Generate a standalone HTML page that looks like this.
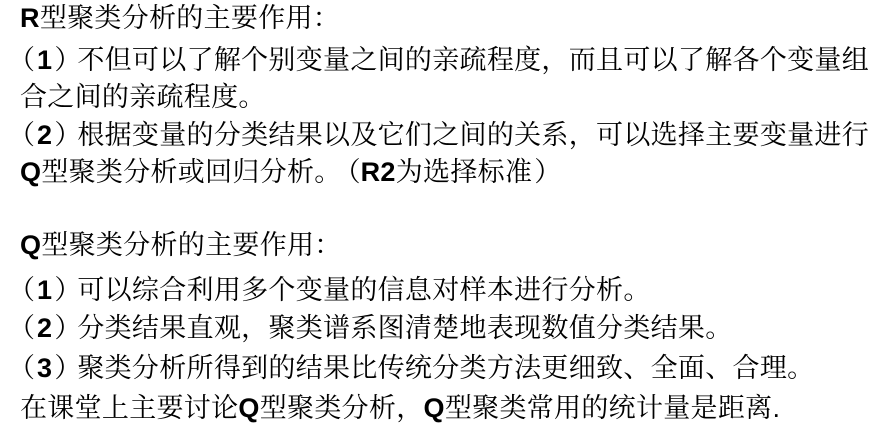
<!DOCTYPE html>
<html><head><meta charset="utf-8"><style>
body{margin:0;width:890px;height:438px;background:#fff;overflow:hidden;position:relative;font-family:"Liberation Sans","Noto Serif CJK SC",serif;color:#000}
.l{position:absolute;left:20px;font-size:27px;line-height:30px;white-space:nowrap;letter-spacing:0.3px}
b{font-weight:bold;font-family:"Liberation Sans",sans-serif}
.o{display:inline-block;width:27px;margin-left:-12px;margin-right:2px}
.c{display:inline-block;width:23px;margin-left:2px;overflow:visible}
.o2{display:inline-block;width:27px;margin-left:-8px}
</style></head><body>
<div class="l" style="top:3px"><b>R</b>型聚类分析的主要作用：</div>
<div class="l" style="top:45px"><span class="o">（</span><b>1</b><span class="c">）</span>不但可以了解个别变量之间的亲疏程度，而且可以了解各个变量组</div>
<div class="l" style="top:82px">合之间的亲疏程度。</div>
<div class="l" style="top:120px"><span class="o">（</span><b>2</b><span class="c">）</span>根据变量的分类结果以及它们之间的关系，可以选择主要变量进行</div>
<div class="l" style="top:157px"><b>Q</b>型聚类分析或回归分析。<span class="o2">（</span><b>R2</b>为选择标准<span class="c">）</span></div>
<div class="l" style="top:230px"><b>Q</b>型聚类分析的主要作用：</div>
<div class="l" style="top:275px"><span class="o">（</span><b>1</b><span class="c">）</span>可以综合利用多个变量的信息对样本进行分析。</div>
<div class="l" style="top:313px"><span class="o">（</span><b>2</b><span class="c">）</span>分类结果直观，聚类谱系图清楚地表现数值分类结果。</div>
<div class="l" style="top:353px"><span class="o">（</span><b>3</b><span class="c">）</span>聚类分析所得到的结果比传统分类方法更细致、全面、合理。</div>
<div class="l" style="top:393px">在课堂上主要讨论<b>Q</b>型聚类分析，<b>Q</b>型聚类常用的统计量是距离.</div>
</body></html>
